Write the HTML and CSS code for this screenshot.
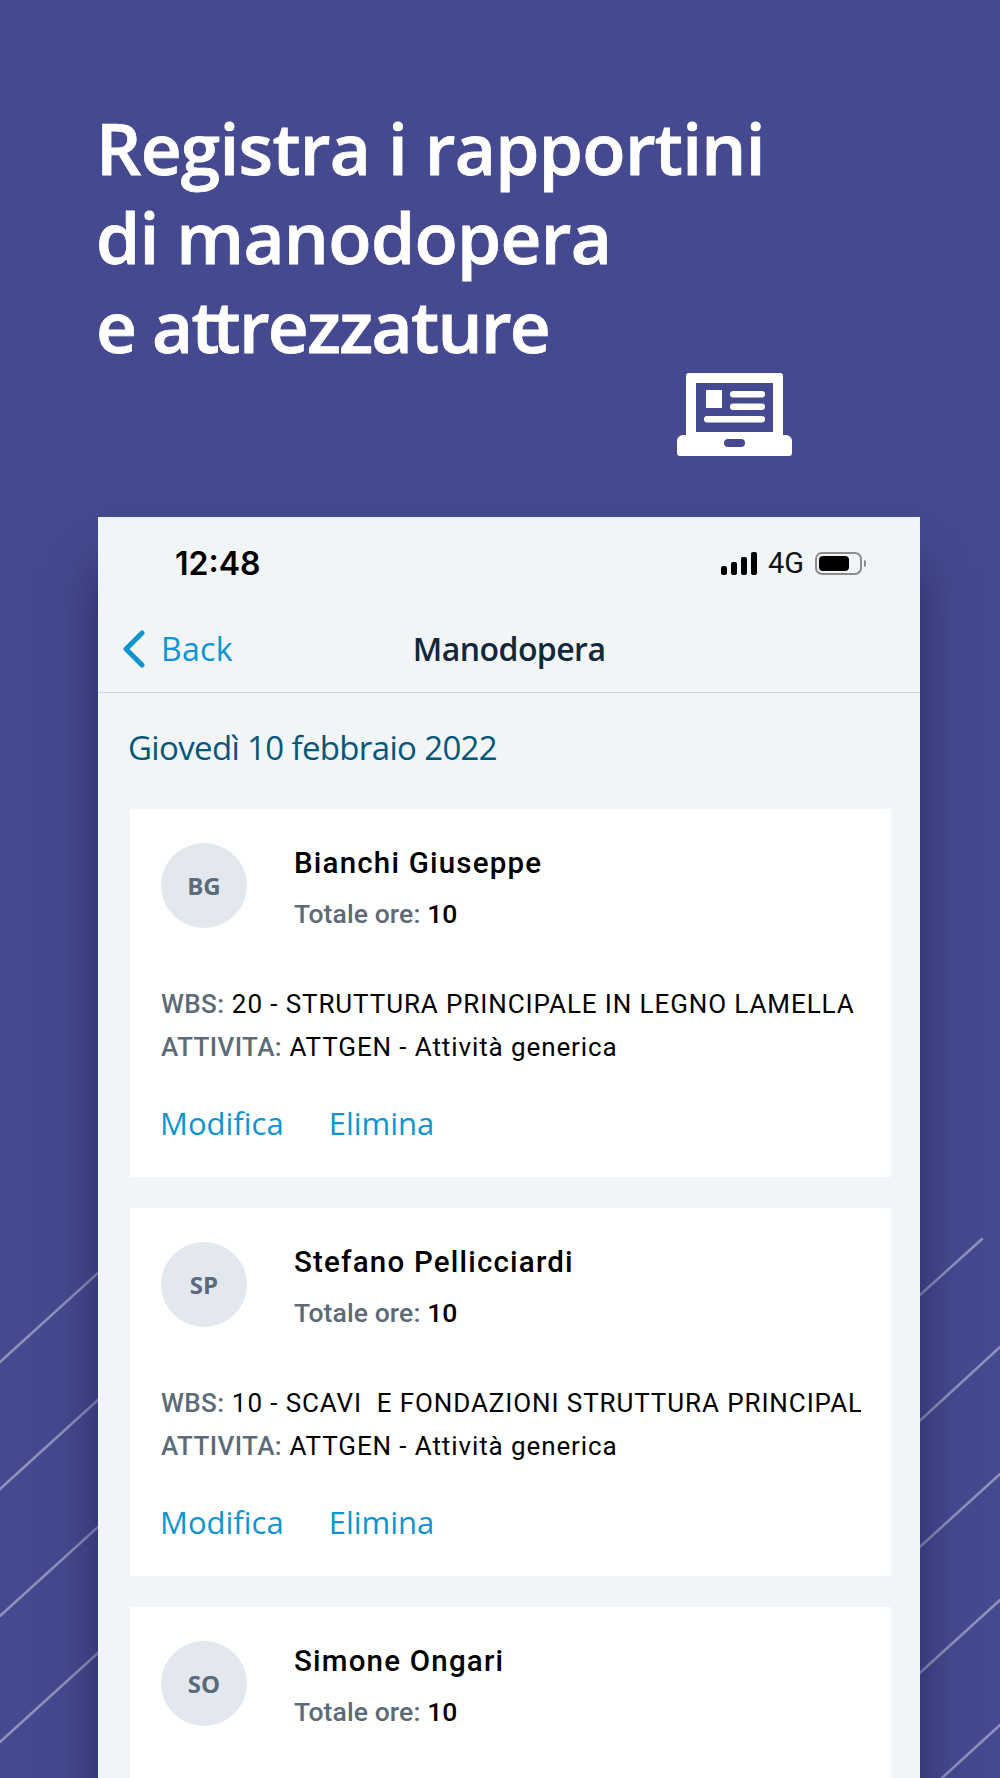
FILE: index.html
```html
<!DOCTYPE html>
<html>
<head>
  <title>Manodopera</title>
  <link rel="stylesheet" href="styles.css">
</head>
<body>

<!-- Diagonal lines behind the phone -->
<svg class="lines" width="1000" height="1778" viewBox="0 0 1000 1778">
  <path d="M0 1362L110 1262M0 1489L110 1389M0 1616L110 1516M0 1742L110 1642"/>
  <path d="M900 1313L982 1239M900 1439L1000 1347M900 1565L1000 1474M900 1691L1000 1600M942 1778L1000 1725"/>
</svg>

<h1 class="title">Registra i rapportini<br>di manodopera<br><span class="tight">e a<span class="tie">t</span>trezzature</span></h1>

<svg class="laptop" width="115" height="83" viewBox="0 0 115 83">
  <path class="solid" d="M12 0H103a3 3 0 0 1 3 3V62H9V3a3 3 0 0 1 3-3Z"/>
  <path class="solid" d="M6 62H109a6 6 0 0 1 6 6V80a3 3 0 0 1-3 3H3a3 3 0 0 1-3-3V68a6 6 0 0 1 6-6Z"/>
  <rect class="cut" x="19" y="10" width="77" height="49"/>
  <rect class="solid" x="29" y="17" width="16" height="18"/>
  <rect class="solid" x="53" y="18" width="35" height="6.5" rx="3.2"/>
  <rect class="solid" x="53" y="30.5" width="35" height="6.5" rx="3.2"/>
  <rect class="solid" x="27" y="43" width="61" height="6.5" rx="3.2"/>
  <rect class="cut" x="47" y="66" width="21" height="8" rx="4"/>
</svg>

<div class="phone">

  <div class="status">
    <span class="time">12:48</span>
    <div class="status-right">
      <div class="signal"><i></i><i></i><i></i><i></i></div>
      <span class="network">4G</span>
      <div class="battery"><i></i></div>
      <div class="battery-tip"></div>
    </div>
  </div>

  <div class="nav">
    <svg class="chevron" width="24" height="38" viewBox="0 0 24 38">
      <path d="M20 3L4 19L20 35"/>
    </svg>
    <span class="back">Back</span>
    <span class="nav-title">Manodopera</span>
  </div>

  <div class="content">
    <div class="date">Giovedì 10 febbraio 2022</div>

    <!-- Card 1 -->
    <div class="card">
      <div class="card-head">
        <div class="avatar">BG</div>
        <div>
          <div class="name">Bianchi Giuseppe</div>
          <div class="hours"><span class="label">Totale ore:</span> 10</div>
        </div>
      </div>
      <div class="row"><span class="label">WBS:</span> 20 - STRUTTURA PRINCIPALE IN LEGNO LAMELLA</div>
      <div class="row second"><span class="label">ATTIVITA:</span> ATTGEN - Attività generica</div>
      <div class="actions"><span>Modifica</span><span>Elimina</span></div>
    </div>

    <!-- Card 2 -->
    <div class="card">
      <div class="card-head">
        <div class="avatar">SP</div>
        <div>
          <div class="name">Stefano Pellicciardi</div>
          <div class="hours"><span class="label">Totale ore:</span> 10</div>
        </div>
      </div>
      <div class="row"><span class="label">WBS:</span> 10 - SCAVI&nbsp; E FONDAZIONI STRUTTURA PRINCIPAL</div>
      <div class="row second"><span class="label">ATTIVITA:</span> ATTGEN - Attività generica</div>
      <div class="actions"><span>Modifica</span><span>Elimina</span></div>
    </div>

    <!-- Card 3 -->
    <div class="card">
      <div class="card-head">
        <div class="avatar">SO</div>
        <div>
          <div class="name">Simone Ongari</div>
          <div class="hours"><span class="label">Totale ore:</span> 10</div>
        </div>
      </div>
    </div>
  </div>

</div>

</body>
</html>
```

FILE: styles.css
```css
html, body {
  margin: 0;
  padding: 0;
}

body {
  width: 1000px;
  height: 1778px;
  overflow: hidden;
  background: #45498f;
  font-family: 'Roboto', sans-serif;
  position: relative;
}

.lines {
  position: absolute;
  top: 0;
  left: 0;
}

.lines path {
  stroke: #8f91bd;
  stroke-width: 2.5;
  stroke-linecap: round;
  fill: none;
}

.title {
  position: relative;
  margin: 0;
  padding: 103px 0 0 96px;
  font-family: 'Open Sans', sans-serif;
  font-size: 71px;
  font-weight: 600;
  line-height: 89px;
  letter-spacing: -0.7px;
  -webkit-text-stroke: 0.8px #fff;
  color: #fff;
}

.tight {
  letter-spacing: -1.7px;
}

.tie {
  letter-spacing: -7px;
}

.laptop {
  position: relative;
  display: block;
  margin: 3px 0 0 677px;
}

.laptop .solid {
  fill: #fff;
}

.laptop .cut {
  fill: #45498f;
}

.phone {
  position: relative;
  width: 822px;
  margin: 61px 0 0 98px;
  background: #f1f5f8;
  box-shadow: 0 50px 45px rgba(25, 25, 70, 0.6);
}

.status {
  display: flex;
  justify-content: space-between;
  align-items: center;
  height: 92px;
  padding: 0 54px 0 77px;
  box-sizing: border-box;
}

.time {
  font-family: 'Inter', sans-serif;
  font-size: 32px;
  font-weight: 600;
  color: #000;
}

.status-right {
  display: flex;
  align-items: center;
}

.signal {
  display: flex;
  align-items: flex-end;
  gap: 4px;
  height: 23px;
}

.signal i {
  width: 6px;
  background: #000;
  border-radius: 2px;
}

.signal i:nth-child(1) { height: 9px; }
.signal i:nth-child(2) { height: 13px; }
.signal i:nth-child(3) { height: 18px; }
.signal i:nth-child(4) { height: 23px; }

.network {
  margin-left: 11px;
  font-family: 'Roboto', sans-serif;
  font-size: 29px;
  color: #111;
}

.battery {
  margin-left: 11px;
  width: 47px;
  height: 23px;
  box-sizing: border-box;
  border: 2px solid #8d8d8d;
  border-radius: 7px;
  padding: 2px;
}

.battery i {
  display: block;
  width: 30px;
  height: 15px;
  background: #000;
  border-radius: 4px;
}

.battery-tip {
  width: 2px;
  height: 7px;
  margin-left: 2px;
  background: #8d8d8d;
  border-radius: 0 2px 2px 0;
}

.nav {
  position: relative;
  display: flex;
  align-items: center;
  height: 84px;
  padding: 0 0 4px 24px;
  box-sizing: border-box;
  border-bottom: 1px solid #d0d5da;
}

.chevron path {
  stroke: #0e94d0;
  stroke-width: 5;
  stroke-linecap: round;
  stroke-linejoin: round;
  fill: none;
}

.back {
  margin-left: 15px;
  font-family: 'Open Sans', sans-serif;
  font-size: 32px;
  letter-spacing: 0.3px;
  color: #0e94d0;
}

.nav-title {
  margin-left: 180px;
  font-family: 'Open Sans', sans-serif;
  font-size: 32px;
  font-weight: 600;
  letter-spacing: -0.55px;
  color: #13283a;
}

.content {
  padding: 32px 29px 0 32px;
}

.date {
  margin: 0 0 38px -2px;
  font-family: 'Open Sans', sans-serif;
  font-size: 33px;
  line-height: 46px;
  letter-spacing: -0.65px;
  color: #04567a;
}

.card {
  height: 368px;
  margin-bottom: 31px;
  padding: 34px 30px 0 31px;
  box-sizing: border-box;
  background: #fff;
}

.card-head {
  display: flex;
  gap: 47px;
}

.avatar {
  display: flex;
  flex: none;
  align-items: center;
  justify-content: center;
  width: 86px;
  height: 85px;
  border-radius: 50%;
  background: #e3e8ef;
  font-family: 'Open Sans', sans-serif;
  font-size: 24px;
  font-weight: 700;
  color: #5b6b7a;
}

.name {
  margin-top: 1px;
  font-size: 29.5px;
  font-weight: 500;
  line-height: 38px;
  letter-spacing: 1.2px;
  color: #000;
}

.hours {
  margin-top: 13px;
  font-size: 26.5px;
  line-height: 38px;
  font-weight: 500;
  letter-spacing: 0.1px;
  color: #000;
}

.label {
  color: #5d6b78;
}

.row {
  margin-top: 52px;
  font-size: 26px;
  line-height: 38px;
  letter-spacing: 0.9px;
  white-space: nowrap;
  overflow: hidden;
  color: #000;
}

.row .label {
  font-weight: 500;
  letter-spacing: 0.4px;
}

.row.second {
  margin-top: 5px;
}

.actions {
  display: flex;
  gap: 45px;
  margin: 36px 0 0 -1px;
  font-family: 'Open Sans', sans-serif;
  font-size: 31px;
  color: #0e94d0;
}
```
